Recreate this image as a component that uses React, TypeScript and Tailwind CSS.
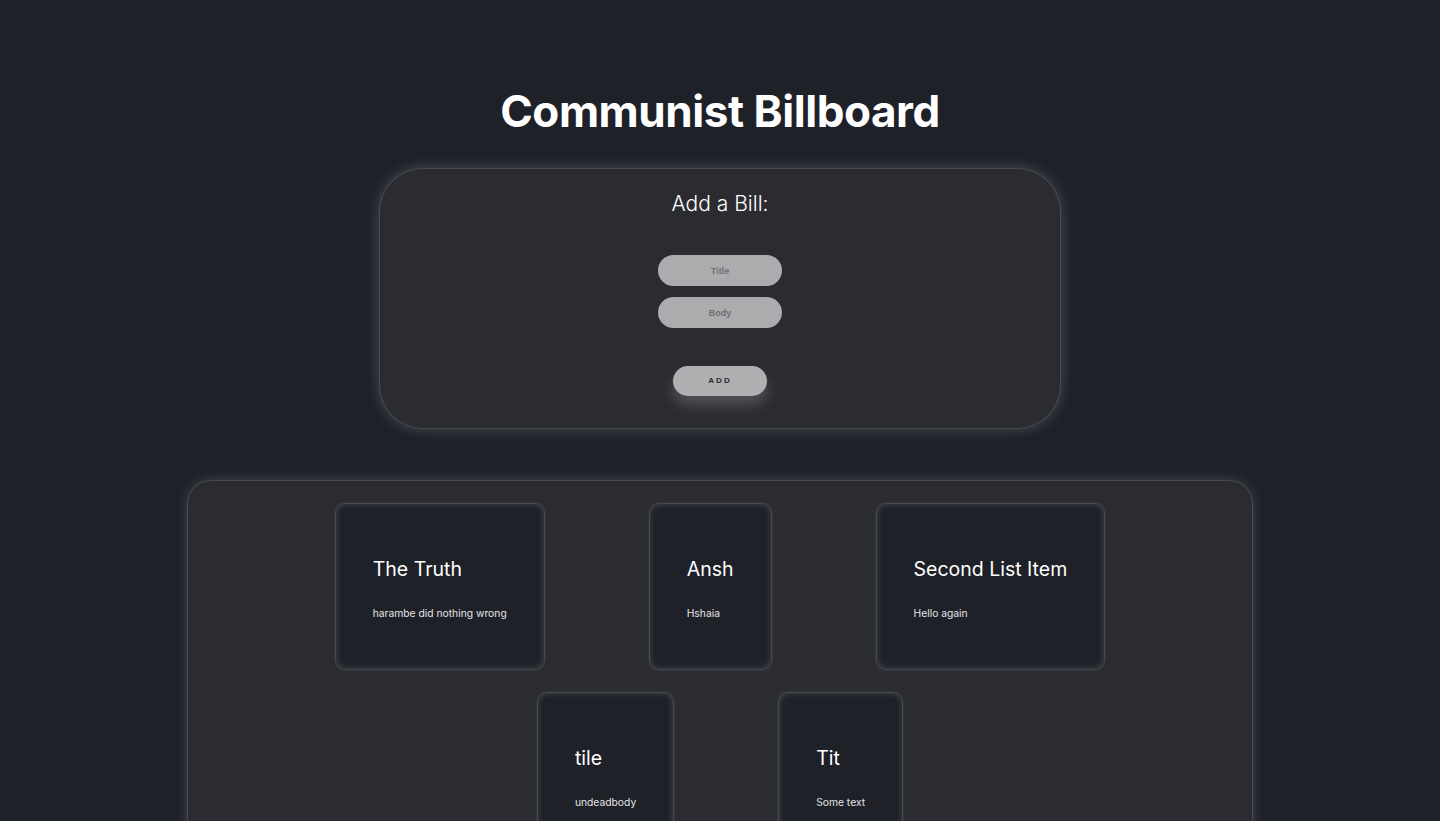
const bills = [
  { title: 'The Truth', body: 'harambe did nothing wrong' },
  { title: 'Ansh', body: 'Hshaia' },
  { title: 'Second List Item', body: 'Hello again' },
  { title: 'tile', body: 'undeadbody' },
  { title: 'Tit', body: 'Some text' },
];

export default function App() {
  return (
    <div className="min-h-screen bg-[#1f2129] font-['Inter',sans-serif] text-white flex flex-col items-center pt-[84px] pb-10">
      <h1 className="text-[44px] font-bold leading-[54px] tracking-[-0.01em]">Communist Billboard</h1>

      {/* Form */}
      <div className="mt-[30px] w-[682px] rounded-[44px] bg-[#2b2c31] border border-[#4a4b50] shadow-[0_0_14px_rgba(255,255,255,0.2)] flex flex-col items-center pt-[21px] pb-[32px]">
        <h2 className="text-[21px] font-light leading-[28px]">Add a Bill:</h2>
        <div className="mt-[37px] flex flex-col gap-[11px]">
          <input
            placeholder="Title"
            className="w-[124px] h-[31px] rounded-full bg-[#acacae] text-center text-[9px] font-bold font-['Liberation_Sans',sans-serif] placeholder:text-[#6f6f72] outline-none"
          />
          <input
            placeholder="Body"
            className="w-[124px] h-[31px] rounded-full bg-[#acacae] text-center text-[9px] font-bold font-['Liberation_Sans',sans-serif] placeholder:text-[#6f6f72] outline-none"
          />
        </div>
        <button className="mt-[38px] w-[94px] h-[30px] rounded-full bg-[#b0b0b2] text-[#2a2a2c] text-[8px] font-bold tracking-[0.25em] font-['Liberation_Sans',sans-serif] shadow-[0_9px_14px_rgba(255,255,255,0.18)]">
          ADD
        </button>
      </div>

      {/* Bills */}
      <div className="mt-[51px] w-[1066px] rounded-[24px] bg-[#2b2c31] border border-[#4a4b50] shadow-[0_0_12px_rgba(255,255,255,0.17)] flex flex-wrap justify-center py-[11px]">
        {bills.map((b) => (
          <div
            key={b.title}
            className="mx-[52px] my-[11px] rounded-[10px] bg-[#1f2129] border border-[#48494e] shadow-[inset_0_0_6px_rgba(255,255,255,0.18),0_0_3px_rgba(255,255,255,0.1)] px-[37px] pt-[51px] pb-[48px]"
          >
            <h3 className="text-[19.5px] leading-[28px] font-normal whitespace-nowrap">{b.title}</h3>
            <p className="mt-[22px] text-[10.3px] leading-[16px] text-[#e4e4e6] whitespace-nowrap">{b.body}</p>
          </div>
        ))}
      </div>
    </div>
  );
}
